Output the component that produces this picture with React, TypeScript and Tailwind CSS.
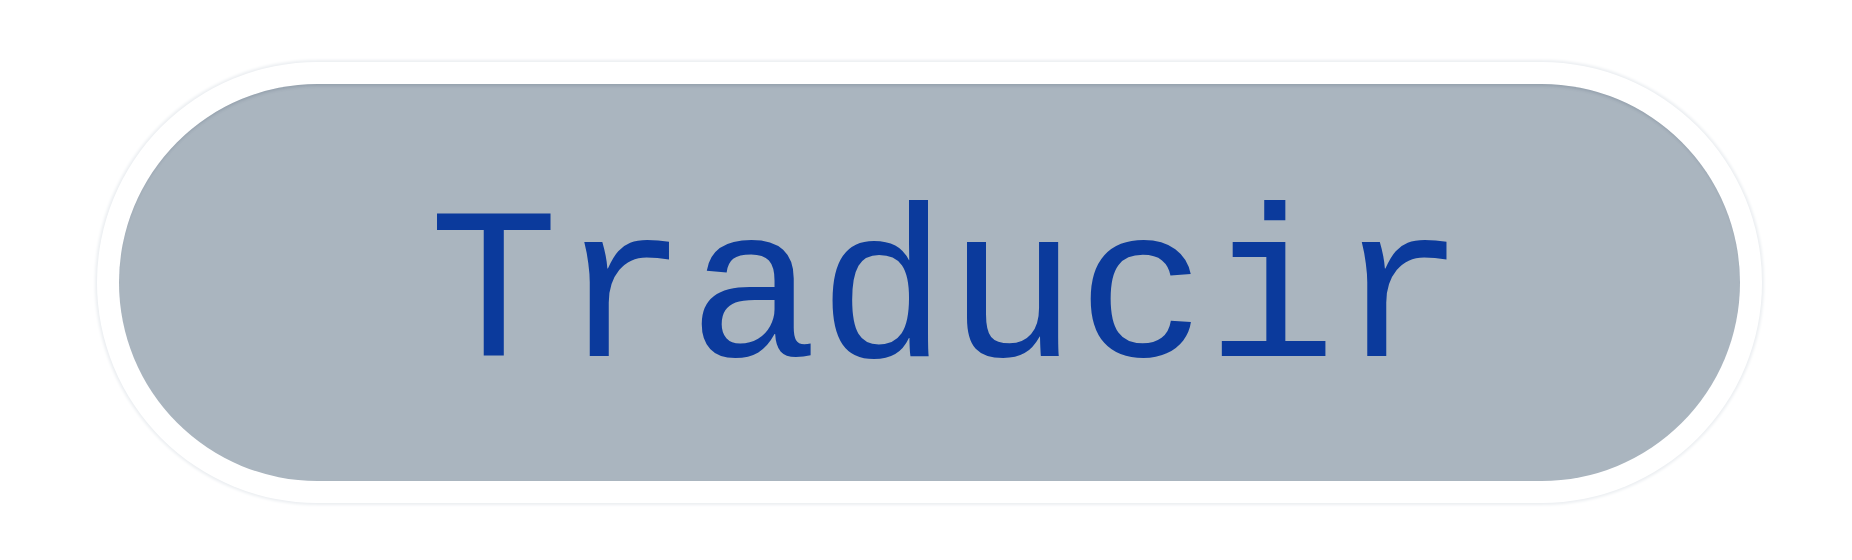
export default function App() {
  return (
    <div className="h-[560px] w-[1852px] bg-white pl-[119px] pt-[84px]">
      <button
        type="button"
        className="flex h-[397px] w-[1621px] items-center justify-center rounded-full bg-[#aab5bf] pl-[36px] pt-[33px] shadow-[inset_0_4px_3px_-2px_rgba(60,80,100,0.18),0_0_0_22px_#ffffff,0_0_3px_24px_#eceff2]"
      >
        <span className="font-['Liberation_Mono',monospace] text-[216px] leading-none text-[#0b3a9c]">
          Traducir
        </span>
      </button>
    </div>
  );
}
